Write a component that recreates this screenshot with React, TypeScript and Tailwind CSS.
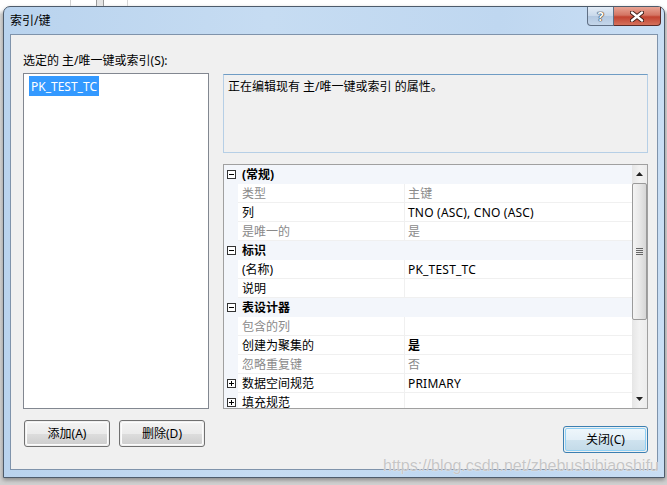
import React from "react";

type Row =
  | { kind: "cat"; label: string }
  | { kind: "item"; name: string; value: string; grey?: boolean; bold?: boolean; expandable?: boolean };

const rows: Row[] = [
  { kind: "cat", label: "(常规)" },
  { kind: "item", name: "类型", value: "主键", grey: true },
  { kind: "item", name: "列", value: "TNO (ASC), CNO (ASC)" },
  { kind: "item", name: "是唯一的", value: "是", grey: true },
  { kind: "cat", label: "标识" },
  { kind: "item", name: "(名称)", value: "PK_TEST_TC" },
  { kind: "item", name: "说明", value: "" },
  { kind: "cat", label: "表设计器" },
  { kind: "item", name: "包含的列", value: "", grey: true },
  { kind: "item", name: "创建为聚集的", value: "是", bold: true },
  { kind: "item", name: "忽略重复键", value: "否", grey: true },
  { kind: "item", name: "数据空间规范", value: "PRIMARY", expandable: true },
  { kind: "item", name: "填充规范", value: "", expandable: true },
];

function Box({ plus }: { plus?: boolean }) {
  return (
    <svg width="9" height="9" viewBox="0 0 9 9" className="block">
      <rect x="0.5" y="0.5" width="8" height="8" fill="#ffffff" stroke="#333333" />
      <line x1="2" y1="4.5" x2="7" y2="4.5" stroke="#000000" />
      {plus && <line x1="4.5" y1="2" x2="4.5" y2="7" stroke="#000000" />}
    </svg>
  );
}

function Win7Button({ label, width, focused }: { label: string; width: string; focused?: boolean }) {
  return (
    <div
      className={
        "h-[27px] rounded-[3px] border p-px " +
        width +
        (focused ? " border-[#3c7fb1]" : " border-[#707070]")
      }
    >
      <div
        className={
          "flex h-full w-full items-center justify-center rounded-[2px] border pt-px text-[12px] text-black " +
          (focused
            ? "border-[#8ed0f5] bg-[linear-gradient(to_bottom,#eef6fb_0%,#e3eff7_50%,#cfe3ef_51%,#c4dbe9_100%)]"
            : "border-[#fcfcfc] bg-[linear-gradient(to_bottom,#f2f2f2_0%,#ebebeb_50%,#dddddd_51%,#cfcfcf_100%)]")
        }
      >
        {label}
      </div>
    </div>
  );
}

export default function App() {
  return (
    <div className="relative h-[485px] w-[667px] overflow-hidden bg-[linear-gradient(to_bottom,#ffffff_0%,#ffffff_2%,#d8d8d8_3%,#d0d0d0_100%)] font-['Noto_Sans','Noto_Sans_CJK_SC',sans-serif]">
      {/* background strip above window */}
      <div className="flex h-[6px] w-full bg-white">
        <div className="ml-[70px] h-full w-px bg-[#d0d0d0]" />
        <div className="ml-[25px] h-full w-[8px] border-x border-[#9a9a9a] bg-[#e4e4e4]" />
        <div className="ml-[23px] h-full w-px bg-[#d6d6d6]" />
      </div>

      {/* window */}
      <div className="ml-[3px] flex h-[472px] w-[662px] flex-col rounded-t-[7px] border border-[#4d5b6b] bg-[linear-gradient(to_right,#b9d3ee_0%,#c6dcf2_40%,#bfd7f0_75%,#c9def4_100%)] shadow-[0_2px_4px_rgba(0,0,0,0.35)]">
        {/* title bar */}
        <div className="flex h-[27px] items-start justify-between pl-[6px] pr-[3px]">
          <div className="pt-[6px] text-[12px] leading-[16px] text-black">索引/键</div>
          <div className="flex">
            <div className="flex h-[19px] w-[27px] items-center justify-center rounded-bl-[4px] border border-t-0 border-[#5f6f84] bg-[linear-gradient(to_bottom,#e3ecf6_0%,#c8d8ea_50%,#b3c8e0_51%,#c4d6ea_100%)]">
              <span className="text-[13px] font-bold leading-none text-white [text-shadow:0_0_1px_#222,0_0_1px_#222,0_0_1px_#222]">?</span>
            </div>
            <div className="flex h-[19px] w-[47px] items-center justify-center rounded-br-[4px] border border-l-0 border-t-0 border-[#5a2a26] bg-[linear-gradient(to_bottom,#e8a393_0%,#d47563_45%,#c24330_55%,#d5705b_100%)]">
              <svg width="14" height="11" viewBox="0 0 14 11">
                <path d="M2 1.5 L12 9.5 M12 1.5 L2 9.5" stroke="#3a1a14" strokeWidth="4.2" strokeLinecap="round" />
                <path d="M2 1.5 L12 9.5 M12 1.5 L2 9.5" stroke="#ffffff" strokeWidth="2.4" strokeLinecap="round" />
              </svg>
            </div>
          </div>
        </div>

        {/* client area */}
        <div className="mx-[6px] h-[436px] border border-[#7f93ab] bg-[#f0f0f0] pl-[12px] text-[12px] text-black">
          <div className="flex gap-[14px]">
            {/* left column */}
            <div className="flex w-[186px] flex-col pt-[17px]">
              <div className="pt-px leading-[16px]">选定的 主/唯一键或索引(S):</div>
              <div className="mt-[4px] h-[336px] border border-[#828790] bg-white pl-[5px] pt-[2px]">
                <div className="inline-block h-[20px] bg-[#3399ff] px-[2px] pt-px leading-[19px] text-white">PK_TEST_TC</div>
              </div>
            </div>

            {/* right column */}
            <div className="flex w-[425px] flex-col pt-[39px]">
              <div className="h-[79px] border border-[#b6cfe6] border-t-[#6f9cc4] bg-[#f0f0f0] px-[4px] pt-[4px] leading-[16px]">
                正在编辑现有 主/唯一键或索引 的属性。
              </div>

              <div className="mt-[11px] flex h-[245px] overflow-hidden border border-[#a0a0a0] bg-white">
                <div className="flex w-[408px] flex-col">
                  {rows.map((r, i) =>
                    r.kind === "cat" ? (
                      <div key={i} className="flex h-[19px] shrink-0 items-center bg-[#f3f6fb]">
                        <div className="flex w-[14px] shrink-0 justify-center">
                          <Box />
                        </div>
                        <div className="pl-[4px] pt-px font-bold leading-[18px]">{r.label}</div>
                      </div>
                    ) : (
                      <div key={i} className="flex h-[19px] shrink-0">
                        <div className="flex w-[14px] shrink-0 items-center justify-center bg-[#f3f6fb]">
                          {r.expandable && <Box plus />}
                        </div>
                        <div
                          className={
                            "w-[167px] shrink-0 border-b border-r border-[#f0f0f0] pl-[4px] pt-px leading-[17px] " +
                            (r.grey ? "text-[#8a8a8a]" : "text-black")
                          }
                        >
                          {r.name}
                        </div>
                        <div
                          className={
                            "flex-1 border-b border-[#f0f0f0] pl-[3px] pt-px leading-[17px] tracking-[0.2px] " +
                            (r.grey ? "text-[#8a8a8a]" : "text-black") +
                            (r.bold ? " font-bold" : "")
                          }
                        >
                          {r.value}
                        </div>
                      </div>
                    )
                  )}
                </div>

                {/* scrollbar */}
                <div className="flex w-[15px] flex-col bg-[linear-gradient(to_right,#e6e6e6_0%,#f2f2f2_50%,#ececec_100%)]">
                  <div className="flex h-[18px] shrink-0 items-center justify-center">
                    <svg width="7" height="4" viewBox="0 0 7 4">
                      <path d="M0 4 L3.5 0 L7 4 Z" fill="#222222" />
                    </svg>
                  </div>
                  <div className="flex h-[137px] shrink-0 items-center justify-center rounded-[2px] border border-[#9a9a9a] bg-[linear-gradient(to_right,#f4f4f4_0%,#e8e8e8_50%,#d6d6d6_100%)]">
                    <div className="flex flex-col gap-px">
                      <div className="h-px w-[7px] bg-[#666666]" />
                      <div className="h-px w-[7px] bg-[#666666]" />
                      <div className="h-px w-[7px] bg-[#666666]" />
                      <div className="h-px w-[7px] bg-[#666666]" />
                    </div>
                  </div>
                  <div className="flex-1" />
                  <div className="flex h-[18px] shrink-0 items-center justify-center">
                    <svg width="7" height="4" viewBox="0 0 7 4">
                      <path d="M0 0 L7 0 L3.5 4 Z" fill="#222222" />
                    </svg>
                  </div>
                </div>
              </div>
            </div>
          </div>

          {/* bottom buttons */}
          <div className="mt-[11px] flex items-start pr-[9px]">
            <div className="ml-px flex gap-[9px]">
              <Win7Button label="添加(A)" width="w-[86px]" />
              <Win7Button label="删除(D)" width="w-[86px]" />
            </div>
            <div className="ml-auto mt-[6px]">
              <Win7Button label="关闭(C)" width="w-[85px]" focused />
            </div>
          </div>
        </div>
      </div>

      {/* watermark */}
      <div className="absolute left-[383px] top-[456px] whitespace-nowrap font-['Liberation_Sans',sans-serif] text-[16px] leading-[19px] text-[#c6c6c6] [text-shadow:0_0_1px_#ffffff]">
        https://blog.csdn.net/zhebushibiaoshifu
      </div>
    </div>
  );
}
